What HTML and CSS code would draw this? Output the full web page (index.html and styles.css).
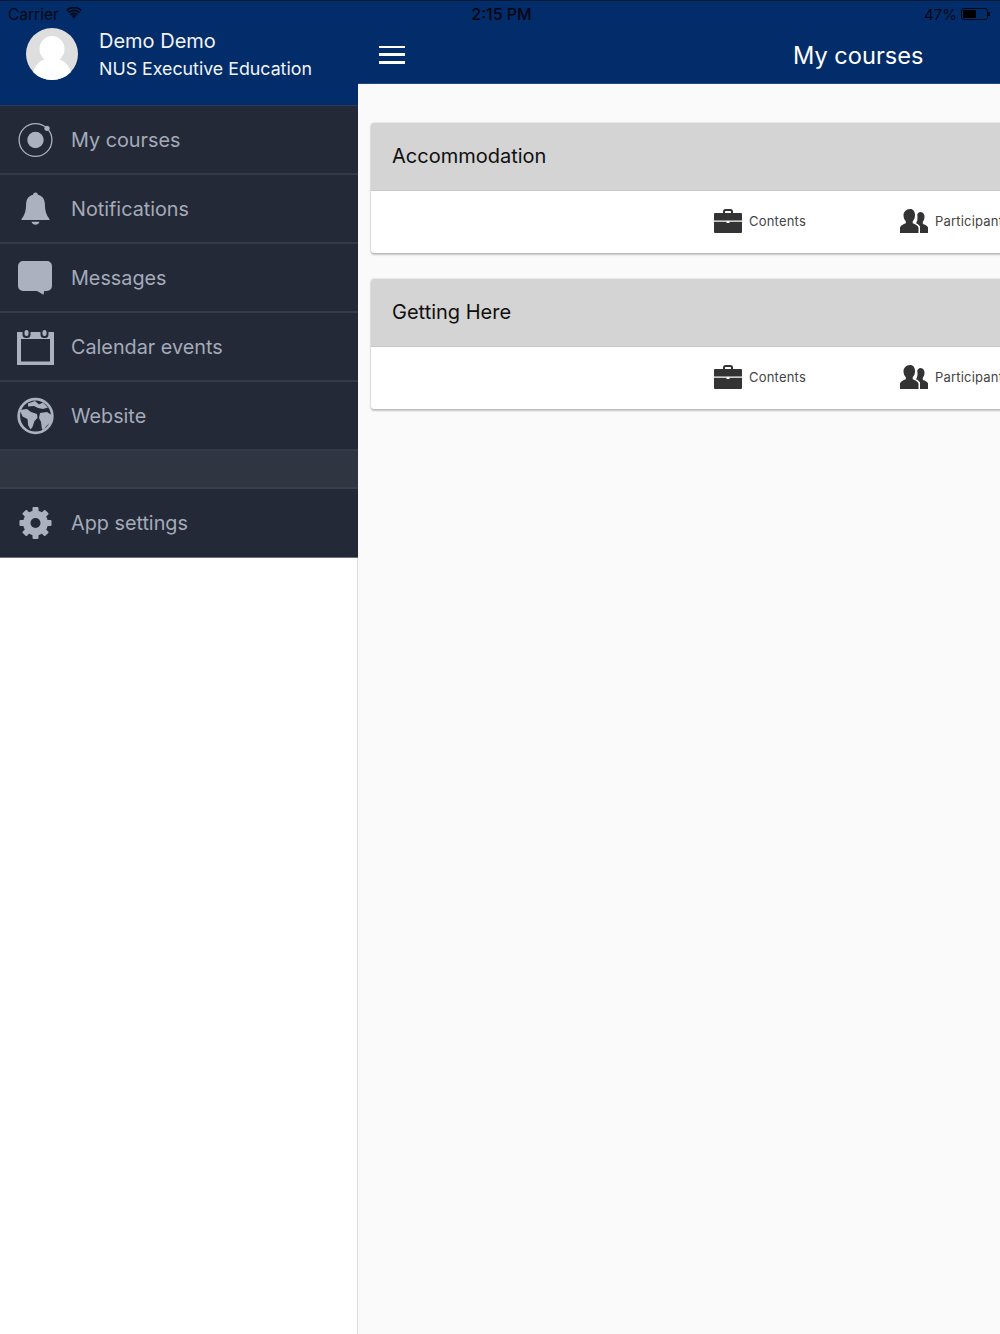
FILE: index.html
```html
<!DOCTYPE html>
<html lang="en">
<head>
<meta charset="utf-8">
<title>My courses</title>
<link rel="stylesheet" href="styles.css">
</head>
<body>
<div class="statusbar">
  <div class="status-left">
    <span>Carrier</span>
    <svg class="wifi" viewBox="0 0 16 12" width="16" height="12"><path d="M8 11.600 5.700 9a3.200 3.200 0 0 1 4.600 0zM3.900 7.200a5.800 5.800 0 0 1 8.200 0l-1.100 1.200a4.200 4.200 0 0 0-6 0zM1.900 5.100a8.600 8.600 0 0 1 12.200 0L13 6.300a7 7 0 0 0-10 0zM0 3a11.300 11.300 0 0 1 16 0l-1.100 1.200a9.700 9.700 0 0 0-13.800 0z"/></svg>
  </div>
  <div class="status-time">2:15 PM</div>
  <div class="status-right">
    <span>47%</span>
    <span class="battery"><span class="battery-fill"></span></span>
    <span class="battery-tip"></span>
  </div>
</div>
<div class="app">
  <aside class="sidebar">
    <div class="side-head">
      <svg class="avatar" viewBox="0 0 52 52" width="52" height="52">
        <defs><clipPath id="av"><circle cx="26" cy="26" r="26"/></clipPath></defs>
        <circle cx="26" cy="26" r="26" fill="#dedede"/>
        <g clip-path="url(#av)" fill="#fff">
          <ellipse cx="26" cy="21" rx="12.500" ry="13"/>
          <ellipse cx="26" cy="47" rx="19" ry="17"/>
        </g>
      </svg>
      <div class="user">
        <div class="user-name">Demo Demo</div>
        <div class="user-org">NUS Executive Education</div>
      </div>
    </div>
    <nav class="menu">
      <a class="item">
        <span class="ico"><svg viewBox="0 0 36 36" width="36" height="36"><circle cx="18.500" cy="18" r="16.400" fill="none" stroke="#abb1bf" stroke-width="1.300"/><circle cx="18.500" cy="18" r="8.200" fill="#abb1bf"/><circle cx="30" cy="6.300" r="2.600" fill="#abb1bf"/></svg></span>
        <span class="label">My courses</span>
      </a>
      <a class="item">
        <span class="ico"><svg viewBox="0 0 36 36" width="36" height="36" fill="#abb1bf"><path d="M18.500 1.500c1.500 0 2.400 1 2.400 2.300 4.600 1 7 4.700 7 9.700 0 6 1.300 10.500 4.600 14.500v1h-28v-1c3.300-4 4.600-8.500 4.600-14.500 0-5 2.400-8.700 7-9.700 0-1.300.9-2.300 2.400-2.300z"/><path d="M14.500 30.700h8c-.6 2-2.100 3-4 3s-3.400-1-4-3z"/></svg></span>
        <span class="label">Notifications</span>
      </a>
      <a class="item">
        <span class="ico"><svg viewBox="0 0 36 36" width="36" height="36" fill="#abb1bf"><path d="M6 1h24a5 5 0 0 1 5 5v20a5 5 0 0 1-5 5h-2.800l-.7 3.700-6.500-3.700H6a5 5 0 0 1-5-5V6a5 5 0 0 1 5-5z"/></svg></span>
        <span class="label">Messages</span>
      </a>
      <a class="item">
        <span class="ico"><svg viewBox="0 0 36 36" width="36" height="36"><path fill="#abb1bf" fill-rule="evenodd" d="M0 3h37v33H0zM4 10v22.500h29V10z"/><rect x="5.500" y="0" width="8" height="9" rx="3.500" fill="#232937"/><rect x="23.500" y="0" width="8" height="9" rx="3.500" fill="#232937"/><rect x="7.500" y="1" width="4" height="6" rx="2" fill="#abb1bf"/><rect x="25.500" y="1" width="4" height="6" rx="2" fill="#abb1bf"/></svg></span>
        <span class="label">Calendar events</span>
      </a>
      <a class="item">
        <span class="ico"><svg viewBox="0 0 36 36" width="36" height="36"><circle cx="18.500" cy="18" r="16.800" fill="none" stroke="#abb1bf" stroke-width="2.800"/><path fill="#abb1bf" d="M3 12.500l3-1 4-.5 4 3 6 2 .5 4-3 3-2 6-2 2.500-2.300-4-.7-6.500-5-2.500zM11 5.500l7-2.500 4 3.500 4-2 5 5-5 1.500-5-1-4-2-6 .5zM23 15l7-1 4.500 3-.5 6.500-5 5-2 3h-2l-1-7.500-2-4z"/></svg></span>
        <span class="label">Website</span>
      </a>
      <div class="divider"></div>
      <a class="item">
        <span class="ico"><svg viewBox="0 0 36 36" width="36" height="36" fill="#abb1bf">
          <circle cx="18.500" cy="18" r="12.500"/>
          <rect x="15.500" y="2" width="6" height="32" rx="1"/>
          <rect x="15.500" y="2" width="6" height="32" rx="1" transform="rotate(45 18.500 18)"/>
          <rect x="15.500" y="2" width="6" height="32" rx="1" transform="rotate(90 18.500 18)"/>
          <rect x="15.500" y="2" width="6" height="32" rx="1" transform="rotate(135 18.500 18)"/>
          <circle cx="18.500" cy="18" r="5" fill="#232937"/>
        </svg></span>
        <span class="label">App settings</span>
      </a>
    </nav>
  </aside>
  <main class="main">
    <header class="topbar">
      <button class="burger" aria-label="Menu"><span></span><span></span><span></span></button>
      <h1 class="title">My courses</h1>
    </header>
    <section class="courses">
      <article class="card">
        <h2 class="card-head">Accommodation</h2>
        <div class="card-body">
          <span class="action action-contents">
            <svg viewBox="0 0 28 24" width="28" height="24" fill="#333"><path fill-rule="evenodd" d="M9 4V2.500C9 1.100 10 0 11.500 0h5C18 0 19 1.100 19 2.500V4h8a1 1 0 0 1 1 1v6.500H0V5a1 1 0 0 1 1-1zm2 0h6V2.500c0-.4-.2-.6-.6-.6h-4.800c-.4 0-.6.2-.6.6z"/><path d="M0 12.800h12.500v1.200h3v-1.200H28V23a1 1 0 0 1-1 1H1a1 1 0 0 1-1-1z"/></svg>
            Contents
          </span>
          <span class="action action-people">
            <svg viewBox="0 0 28 24" width="28" height="24" fill="#333"><path d="M10 0c3.400 0 5 2.700 5 6 0 2.700-.9 5-2.300 6.200v2.100c2.600.9 5 2.200 5.800 4.200V24H0v-5.500c.8-2 3.200-3.300 5.800-4.200v-2.100C4.400 11 3.500 8.700 3.500 6c0-2.500 2.500-6 6.500-6z"/><path d="M20.500 3c2.800 0 4 2.200 4 4.800 0 2.200-.7 3.900-1.700 4.900V15c2.300.7 4.300 1.700 5.200 3.300V24h-8v-6.500c-1-1.500-2.400-2.500-4-3.200 1-1.500 1.500-3.500 1.500-5.800 0-1.300-.1-2-.3-2.800.6-1.500 1.700-2.700 3.300-2.700z"/></svg>
            Participants
          </span>
        </div>
      </article>
      <article class="card">
        <h2 class="card-head">Getting Here</h2>
        <div class="card-body">
          <span class="action action-contents">
            <svg viewBox="0 0 28 24" width="28" height="24" fill="#333"><path fill-rule="evenodd" d="M9 4V2.500C9 1.100 10 0 11.500 0h5C18 0 19 1.100 19 2.500V4h8a1 1 0 0 1 1 1v6.500H0V5a1 1 0 0 1 1-1zm2 0h6V2.500c0-.4-.2-.6-.6-.6h-4.800c-.4 0-.6.2-.6.6z"/><path d="M0 12.800h12.500v1.200h3v-1.200H28V23a1 1 0 0 1-1 1H1a1 1 0 0 1-1-1z"/></svg>
            Contents
          </span>
          <span class="action action-people">
            <svg viewBox="0 0 28 24" width="28" height="24" fill="#333"><path d="M10 0c3.400 0 5 2.700 5 6 0 2.700-.9 5-2.300 6.200v2.100c2.600.9 5 2.200 5.800 4.200V24H0v-5.500c.8-2 3.200-3.300 5.800-4.200v-2.100C4.400 11 3.500 8.700 3.500 6c0-2.500 2.500-6 6.500-6z"/><path d="M20.500 3c2.800 0 4 2.200 4 4.800 0 2.200-.7 3.900-1.700 4.900V15c2.300.7 4.300 1.700 5.200 3.300V24h-8v-6.500c-1-1.500-2.400-2.500-4-3.200 1-1.500 1.500-3.500 1.500-5.800 0-1.300-.1-2-.3-2.800.6-1.500 1.700-2.700 3.300-2.700z"/></svg>
            Participants
          </span>
        </div>
      </article>
    </section>
  </main>
</div>
</body>
</html>
```
FILE: styles.css
```css
* { box-sizing: border-box; }
html, body { margin: 0; height: 100%; }
body {
  width: 1000px;
  height: 1334px;
  overflow: hidden;
  position: relative;
  font-family: Inter, "Liberation Sans", sans-serif;
  background: #fff;
}
.statusbar {
  position: absolute;
  top: 0;
  left: 0;
  width: 1000px;
  height: 27px;
  border-top: 1px solid #0a1a33;
  display: grid;
  grid-template-columns: 1fr auto 1fr;
  align-items: center;
  padding: 0 8px;
  font-size: 15.500px;
  color: #000814;
  z-index: 2;
}
.status-left { display: flex; align-items: center; gap: 7px; }
.wifi { fill: #000814; margin-top: -3px; }
.status-time { color: #000510; font-size: 16px; font-weight: 500; margin-left: 3px; }
.status-right { display: flex; align-items: center; justify-content: flex-end; padding-right: 2px; font-size: 15px; }
.battery {
  width: 27px;
  height: 12px;
  margin-left: 4px;
  border: 1px solid #000814;
  border-radius: 3px;
  padding: 1px;
  display: flex;
}
.battery-fill { width: 13px; background: #000; border-radius: 1px; }
.battery-tip { width: 2px; height: 4px; background: #000814; }
.app { display: flex; width: 1000px; height: 1334px; }
.sidebar {
  width: 358px;
  flex: none;
  background: #fff;
  border-right: 1px solid #dcdcdc;
}
.side-head {
  height: 106px;
  background: #022c6a;
  border-bottom: 1px solid #2c3a5c;
  display: flex;
  align-items: flex-start;
  padding: 28px 0 0 26px;
  margin-right: -1px;
  color: #f2f4f8;
}
.avatar { flex: none; }
.user { margin-left: 21px; }
.user-name { font-size: 20px; line-height: 26px; }
.user-org { font-size: 17.800px; line-height: 28px; margin-top: 1px; }
.menu { background: #232937; margin-right: -1px; }
.item {
  display: flex;
  align-items: center;
  height: 69px;
  padding: 1px 0 0 17px;
  border-bottom: 2px solid #343a48;
  color: #a5abb9;
  font-size: 19.800px;
}
.item:last-child { padding-top: 0; border-bottom: 1px solid #6b7180; }
.ico { width: 36px; height: 36px; flex: none; display: flex; }
.ico svg { overflow: visible; }
.label { margin-left: 18px; }
.divider {
  height: 38px;
  background: #2f3541;
  border-bottom: 2px solid #393f4d;
}
.main { flex: 1; min-width: 0; background: #fafafa; overflow: hidden; }
.topbar {
  height: 84px;
  background: #022c6a;
  border-bottom: 1px solid #1d4a80;
  display: flex;
  align-items: center;
  padding: 28px 0 0 21px;
}
.burger {
  width: 26px;
  height: 18px;
  margin-top: -2px;
  padding: 0;
  border: 0;
  background: none;
  display: flex;
  flex-direction: column;
  justify-content: space-between;
}
.burger span { display: block; height: 2.500px; background: #fff; }
.title {
  margin: 0 0 0 388px;
  font-size: 23.600px;
  font-weight: 400;
  color: #fff;
  white-space: nowrap;
}
.courses { padding: 39px 0 0 13px; width: 700px; }
.card {
  width: 690px;
  margin-bottom: 26px;
  background: #fff;
  border-radius: 3px 0 0 3px;
  box-shadow: 0 0 2px rgba(0, 0, 0, .25), 0 2px 2px rgba(0, 0, 0, .2);
}
.card-head {
  margin: 0;
  height: 68px;
  padding: 0 0 2px 21px;
  display: flex;
  align-items: center;
  background: #d4d4d4;
  border-bottom: 1px solid #c8c8c8;
  border-radius: 3px 0 0 0;
  color: #0f0f0f;
  font-size: 20px;
  font-weight: 400;
}
.card-body {
  height: 62px;
  padding-bottom: 2px;
  display: flex;
  align-items: center;
  font-size: 13px;
  letter-spacing: .2px;
  color: #444;
  white-space: nowrap;
}
.action { display: flex; align-items: center; gap: 7px; }
.action-contents { margin-left: 343px; width: 186px; }
```
